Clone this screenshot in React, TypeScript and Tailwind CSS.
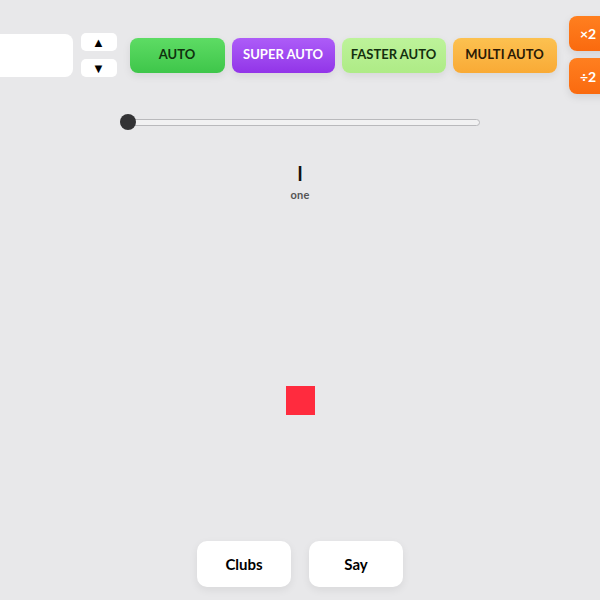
import { ChangeEvent, useState } from "react";

const modes = [
  { label: "AUTO", w: "w-[95px]", cls: "bg-gradient-to-b from-[#5ddc64] to-[#3ec64a] text-[#10300f]" },
  { label: "SUPER AUTO", w: "w-[103px]", cls: "bg-gradient-to-b from-[#ad5cf8] to-[#9234e8] text-white" },
  { label: "FASTER AUTO", w: "w-[104px]", cls: "bg-gradient-to-b from-[#bdf39a] to-[#aeeb86] text-[#14300f]" },
  { label: "MULTI AUTO", w: "w-[104px]", cls: "bg-gradient-to-b from-[#fcc150] to-[#f9aa35] text-[#2a1a05]" },
];

export default function App() {
  const [value, setValue] = useState("");

  return (
    <div className="h-[600px] w-full overflow-hidden bg-[#e8e8ea] font-['Lato',sans-serif]">
      {/* Top controls */}
      <div className="mt-[16px] flex h-[78px] items-center justify-center">
        <input
          value={value}
          onChange={(e: ChangeEvent<HTMLInputElement>) => setValue(e.target.value)}
          className="h-[43px] w-[100px] shrink-0 rounded-lg bg-white outline-none"
        />
        <div className="ml-[8px] flex shrink-0 flex-col gap-[8px]">
          <button className="flex h-[18px] w-[36px] items-center justify-center rounded-[5px] bg-white text-[13px] leading-none text-black">
            ▲
          </button>
          <button className="flex h-[18px] w-[36px] items-center justify-center rounded-[5px] bg-white text-[13px] leading-none text-black">
            ▼
          </button>
        </div>
        <div className="ml-[13px] flex shrink-0 gap-[7px]">
          {modes.map((m) => (
            <button
              key={m.label}
              className={`h-[35px] ${m.w} rounded-lg text-[13px] font-bold shadow-[0_3px_8px_rgba(0,0,0,0.08)] ${m.cls}`}
            >
              {m.label}
            </button>
          ))}
        </div>
        <div className="ml-[12px] flex shrink-0 flex-col gap-[7px]">
          <button className="h-[35px] w-[59px] rounded-lg bg-gradient-to-b from-[#ff7f1f] to-[#fa6a0e] pr-[20px] text-[14px] font-bold text-white shadow-[0_3px_8px_rgba(0,0,0,0.1)]">
            ×2
          </button>
          <button className="h-[36px] w-[59px] rounded-lg bg-gradient-to-b from-[#ff7f1f] to-[#fa6a0e] pr-[20px] text-[14px] font-bold text-white shadow-[0_3px_8px_rgba(0,0,0,0.1)]">
            ÷2
          </button>
        </div>
      </div>

      {/* Slider */}
      <div className="mx-auto mt-[20px] flex h-[16px] w-[360px] items-center">
        <div className="relative h-[7px] w-full rounded-full border border-[#b9b9bc] bg-[#f1f1f2]">
          <div className="absolute left-[-1px] top-1/2 h-[16px] w-[16px] -translate-y-1/2 rounded-full bg-[#333335]" />
        </div>
      </div>

      {/* Numeral */}
      <div className="mt-[30px] flex flex-col items-center">
        <div className="text-[21px] font-semibold leading-[26px] text-[#111]">I</div>
        <div className="mt-[3px] text-[11px] font-bold leading-[12px] tracking-wide text-[#555]">one</div>
      </div>

      <div className="mx-auto mt-[185px] h-[29px] w-[29px] bg-[#ff2b3e]" />

      {/* Bottom actions */}
      <div className="mt-[126px] flex justify-center gap-[18px]">
        <button className="h-[46px] w-[94px] rounded-[10px] bg-white text-[15px] font-bold text-black shadow-[0_3px_8px_rgba(0,0,0,0.07)]">
          Clubs
        </button>
        <button className="h-[46px] w-[94px] rounded-[10px] bg-white text-[15px] font-bold text-black shadow-[0_3px_8px_rgba(0,0,0,0.07)]">
          Say
        </button>
      </div>
    </div>
  );
}
